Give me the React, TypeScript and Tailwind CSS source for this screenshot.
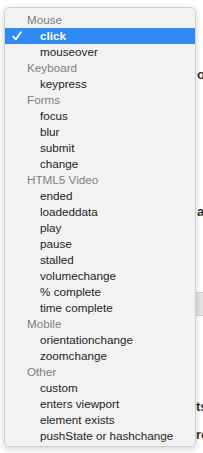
import React from "react";

type Row = { label: string; header?: boolean; selected?: boolean };

const rows: Row[] = [
  { label: "Mouse", header: true },
  { label: "click", selected: true },
  { label: "mouseover" },
  { label: "Keyboard", header: true },
  { label: "keypress" },
  { label: "Forms", header: true },
  { label: "focus" },
  { label: "blur" },
  { label: "submit" },
  { label: "change" },
  { label: "HTML5 Video", header: true },
  { label: "ended" },
  { label: "loadeddata" },
  { label: "play" },
  { label: "pause" },
  { label: "stalled" },
  { label: "volumechange" },
  { label: "% complete" },
  { label: "time complete" },
  { label: "Mobile", header: true },
  { label: "orientationchange" },
  { label: "zoomchange" },
  { label: "Other", header: true },
  { label: "custom" },
  { label: "enters viewport" },
  { label: "element exists" },
  { label: "pushState or hashchange" },
];

export default function App() {
  return (
    <div
      className="relative w-[203px] h-[453px] overflow-hidden bg-white text-[11.7px] leading-[16px]"
      style={{ fontFamily: '"Liberation Sans", Arial, sans-serif' }}
    >
      {/* background page content, mostly hidden behind the menu */}
      <div className="flex flex-col pl-[197px] pt-[66px] text-[13px] leading-[18px] font-bold text-[#333] whitespace-nowrap">
        <div>o</div>
        <div className="mt-[119px]">a</div>
        <div className="mt-[71px] -ml-[1px] w-[10px] h-[24px] bg-[#e2e2e2] border-y border-[#d0d0d0]" />
        <div className="mt-[82px] -ml-[1px]">ts</div>
        <div className="mt-[10px] -ml-[1px]">re</div>
      </div>

      {/* popup menu overlay */}
      <div className="absolute left-[4px] top-[7px] w-[192px] h-[440px] rounded-[5px] border border-[#cfcfcf] bg-[#f2f2f2] shadow-[0_2px_6px_rgba(0,0,0,0.18)] pt-[4px] flex flex-col">
        {rows.map((r, i) =>
          r.header ? (
            <div key={i} className="h-[16px] pl-[22px] text-[#7f7f7f] whitespace-nowrap">
              {r.label}
            </div>
          ) : r.selected ? (
            <div
              key={i}
              className="h-[16px] flex items-center bg-[#2f8af4] text-white font-bold whitespace-nowrap"
            >
              <span className="w-[35px] flex justify-start pl-[7px]">
                <svg width="10" height="10" viewBox="0 0 10 10">
                  <path
                    d="M1.2 5.6 L3.8 8.4 L8.8 1.2"
                    fill="none"
                    stroke="white"
                    strokeWidth="1.8"
                    strokeLinecap="round"
                    strokeLinejoin="round"
                  />
                </svg>
              </span>
              {r.label}
            </div>
          ) : (
            <div key={i} className="h-[16px] pl-[35px] text-[#1f1f1f] whitespace-nowrap">
              {r.label}
            </div>
          )
        )}
      </div>
    </div>
  );
}
